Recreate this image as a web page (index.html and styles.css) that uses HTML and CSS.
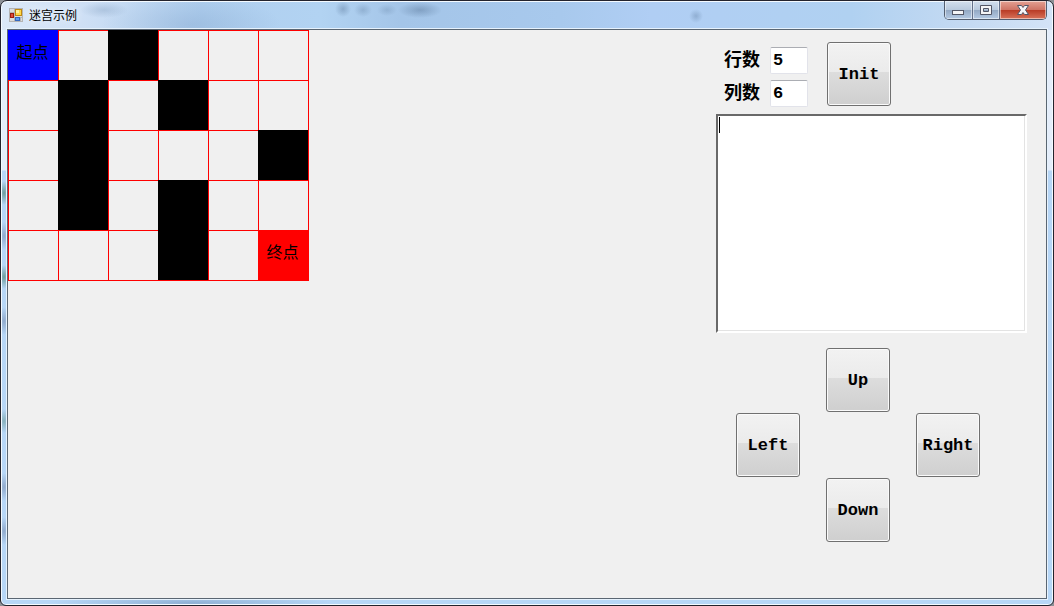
FILE: index.html
```html
<!DOCTYPE html>
<html lang="zh-CN">
<head>
    <meta charset="UTF-8">
    <title>迷宫示例</title>
    <link rel="stylesheet" href="styles.css">
</head>
<body>
<div class="window">
    <header class="titlebar">
        <svg class="app-icon" width="14" height="14" viewBox="0 0 14 14">
            <rect x="0.5" y="0.5" width="13" height="13" fill="#dcdcdc" stroke="#b4b4b4"/>
            <path d="M5.5 0v14M0 4.5h5M0 9.5h14M11.5 9v5" stroke="#b4b4b4" fill="none"/>
            <rect x="6.5" y="1.5" width="6" height="6" fill="#ffd84a" stroke="#c08a10"/>
            <rect x="7" y="2" width="3" height="3" fill="#fff0a0"/>
            <rect x="1.5" y="5.5" width="3" height="4" fill="#e04a38" stroke="#9c1c10"/>
            <rect x="6.5" y="9.5" width="4" height="3" fill="#5f9cf0" stroke="#3568c0"/>
        </svg>
        <h1 class="title">迷宫示例</h1>
        <div class="caption-buttons">
            <button class="caption-btn minimize" aria-label="最小化">
                <svg width="13" height="11" viewBox="0 0 13 11">
                    <rect x="0.5" y="5.5" width="11" height="4" fill="#f4f4f6" stroke="#535666"/>
                </svg>
            </button>
            <button class="caption-btn maximize" aria-label="最大化">
                <svg width="13" height="11" viewBox="0 0 13 11">
                    <path d="M0.5 0.5h11v9h-11zM3.5 3.5v3h5v-3z" fill="#f4f4f6" fill-rule="evenodd" stroke="#535666"/>
                </svg>
            </button>
            <button class="caption-btn close" aria-label="关闭">
                <svg width="13" height="11" viewBox="0 0 13 11">
                    <path d="M0.5 0.5h4l1.5 2 1.5-2h4l-3 4.5 3 4.5h-4l-1.5-2-1.5 2h-4l3-4.5z" fill="#f4f4f6" stroke="#535666"/>
                </svg>
            </button>
        </div>
    </header>
    <main class="client">
        <section class="maze-area">
            <div class="maze">
                <div class="cell start">起点</div>
                <div class="cell"></div>
                <div class="cell wall"></div>
                <div class="cell"></div>
                <div class="cell"></div>
                <div class="cell"></div>

                <div class="cell"></div>
                <div class="cell wall"></div>
                <div class="cell"></div>
                <div class="cell wall"></div>
                <div class="cell"></div>
                <div class="cell"></div>

                <div class="cell"></div>
                <div class="cell wall"></div>
                <div class="cell"></div>
                <div class="cell"></div>
                <div class="cell"></div>
                <div class="cell wall"></div>

                <div class="cell"></div>
                <div class="cell wall"></div>
                <div class="cell"></div>
                <div class="cell wall"></div>
                <div class="cell"></div>
                <div class="cell"></div>

                <div class="cell"></div>
                <div class="cell"></div>
                <div class="cell"></div>
                <div class="cell wall"></div>
                <div class="cell"></div>
                <div class="cell end">终点</div>
            </div>
        </section>
        <aside class="panel">
            <div class="settings">
                <div class="fields">
                    <div class="row">
                        <label for="rows">行数</label>
                        <input type="text" id="rows" value="5">
                    </div>
                    <div class="row">
                        <label for="cols">列数</label>
                        <input type="text" id="cols" value="6">
                    </div>
                </div>
                <button class="btn">Init</button>
            </div>
            <textarea class="log" aria-label="输出"></textarea>
            <div class="pad">
                <button class="btn up">Up</button>
                <button class="btn left">Left</button>
                <button class="btn right">Right</button>
                <button class="btn down">Down</button>
            </div>
        </aside>
    </main>
</div>
</body>
</html>
```
FILE: styles.css
```css
* {
    box-sizing: border-box;
}

body {
    margin: 0;
    background: #8c9096;
    font-family: "Liberation Mono", "Noto Sans CJK SC", monospace;
}

/* glass frame */
.window {
    display: flex;
    flex-direction: column;
    min-height: 100vh;
    padding: 0 6px 6px;
    border: 1px solid #23232d;
    border-radius: 7px 7px 6px 6px;
    box-shadow: inset 0 0 0 1px #f4faff;
    background:
        radial-gradient(ellipse 24px 8px at 103px 9px, rgba(110, 140, 175, 0.3), transparent),
        radial-gradient(ellipse 90px 30px at 190px 24px, rgba(125, 160, 200, 0.35), transparent),
        radial-gradient(ellipse 8px 8px at 342px 8px, rgba(85, 115, 150, 0.4), transparent),
        radial-gradient(ellipse 9px 7px at 362px 9px, rgba(85, 115, 150, 0.3), transparent),
        radial-gradient(ellipse 10px 6px at 386px 9px, rgba(85, 115, 150, 0.25), transparent),
        radial-gradient(ellipse 22px 8px at 419px 9px, rgba(85, 115, 150, 0.45), transparent),
        radial-gradient(ellipse 7px 7px at 695px 15px, rgba(85, 115, 150, 0.35), transparent),
        radial-gradient(ellipse 6px 12px at 3px 192px, #6d9c9c, transparent),
        radial-gradient(ellipse 6px 12px at 3px 276px, #6d9c9c, transparent),
        radial-gradient(ellipse 6px 12px at 3px 420px, #86b0bb, transparent),
        radial-gradient(ellipse 6px 14px at 3px 235px, #90a9cb, transparent),
        radial-gradient(ellipse 6px 14px at 3px 320px, #90a9cb, transparent),
        radial-gradient(ellipse 6px 14px at 3px 486px, #90a9cb, transparent),
        radial-gradient(ellipse 6px 14px at 3px 530px, #90a9cb, transparent),
        radial-gradient(ellipse 140px 8px at 190px 602px, #8fb0d4, transparent),
        linear-gradient(90deg, #dbe8f8 0, #cfe0f5 80px, #b0cfef 200px, #b2d3f2 320px, #a4c5e8 400px, #a8c9ed 560px, #b0cef4 650px, #b0d1f1 850px, #c5daf2 970px, #d3e3f7 100%) 0 0 / 100% 29px no-repeat,
        linear-gradient(#e4edfa 0, #e4edfa 169px, #b7d6f6 170px, #b7d7f7 100%);
}

.titlebar {
    display: flex;
    align-items: center;
    height: 28px;
    padding-left: 2px;
}

.app-icon {
    margin-right: 6px;
}

.title {
    flex: 1;
    margin: 0;
    font: 12px/16px "Noto Sans CJK SC", sans-serif;
    text-shadow: 0 0 8px #fff;
}

.caption-buttons {
    display: flex;
    align-self: flex-start;
    height: 19px;
    border: 1px solid #535e70;
    border-top: 0;
    border-radius: 0 0 5px 5px;
    overflow: hidden;
}

.caption-btn {
    display: flex;
    align-items: center;
    justify-content: center;
    width: 28px;
    padding: 0;
    border: 0;
    border-right: 1px solid #64718a;
    background: linear-gradient(#d3dfee, #b9cade 48%, #93a8c3 50%, #b5cae4);
    box-shadow: inset 0 0 0 1px rgba(255, 255, 255, 0.5);
}

.caption-btn.maximize {
    width: 27px;
}

.caption-btn.close {
    width: 46px;
    border-right: 0;
    background: linear-gradient(#e4a194, #cf7465 48%, #b83a24 50%, #d8735a);
}

.client {
    display: flex;
    flex: 1;
    justify-content: space-between;
    border: 1px solid #5a6672;
    outline: 1px solid #e6f2fd;
    background: #f0f0f0;
}

.maze {
    display: grid;
    grid-template-columns: repeat(6, 50px);
    grid-auto-rows: 50px;
    border: solid red;
    border-width: 0 1px 1px 0;
}

.cell {
    padding-right: 2px;
    border: solid red;
    border-width: 1px 0 0 1px;
    font-size: 16px;
    line-height: 46px;
    text-align: center;
}

.wall {
    border-color: black;
    background: black;
}

.start {
    border-color: blue;
    background: blue;
}

.end {
    background: red;
}

.panel {
    width: 311px;
    margin: 12px 19px 0 0;
}

.settings {
    display: flex;
    gap: 19px;
    padding-left: 8px;
    margin-bottom: 7px;
}

.fields {
    display: flex;
    flex-direction: column;
    gap: 6px;
    padding-top: 5px;
}

.row {
    display: flex;
    align-items: center;
    gap: 10px;
}

.row label {
    font-size: 18px;
    font-weight: bold;
    line-height: 24px;
}

.row input {
    width: 38px;
    height: 27px;
    padding: 0 2px;
    border: 1px solid #e2e3ea;
    border-top-color: #abadb3;
    border-radius: 2px;
    background: #fff;
    font: bold 17px "Liberation Mono", monospace;
}

.btn {
    width: 64px;
    height: 64px;
    padding: 0;
    border: 1px solid #707070;
    border-radius: 3px;
    background: linear-gradient(#f2f2f2, #ebebeb 47%, #dddddd 47%, #cfcfcf);
    box-shadow: inset 0 0 0 1px #fafafa;
    color: #000;
    font: bold 17px "Liberation Mono", monospace;
}

/* the caret of the empty box is part of its background */
.log {
    display: block;
    width: 100%;
    height: 219px;
    padding: 1px;
    border: 2px solid;
    border-color: #696969 #fff #fff #696969;
    outline: none;
    background: linear-gradient(#000, #000) 1px 1px / 1px 16px no-repeat #fff;
    box-shadow: inset -1px -1px 0 #e3e3e3;
    font: bold 17px "Liberation Mono", monospace;
    resize: none;
}

.pad {
    display: grid;
    grid-template-columns: 64px 64px 64px;
    grid-template-rows: 64px 64px 64px;
    grid-template-areas: ". up ." "left . right" ". down .";
    column-gap: 26px;
    row-gap: 1px;
    padding: 15px 0 0 20px;
}

.up {
    grid-area: up;
}

.left {
    grid-area: left;
}

.right {
    grid-area: right;
}

.down {
    grid-area: down;
}
```
